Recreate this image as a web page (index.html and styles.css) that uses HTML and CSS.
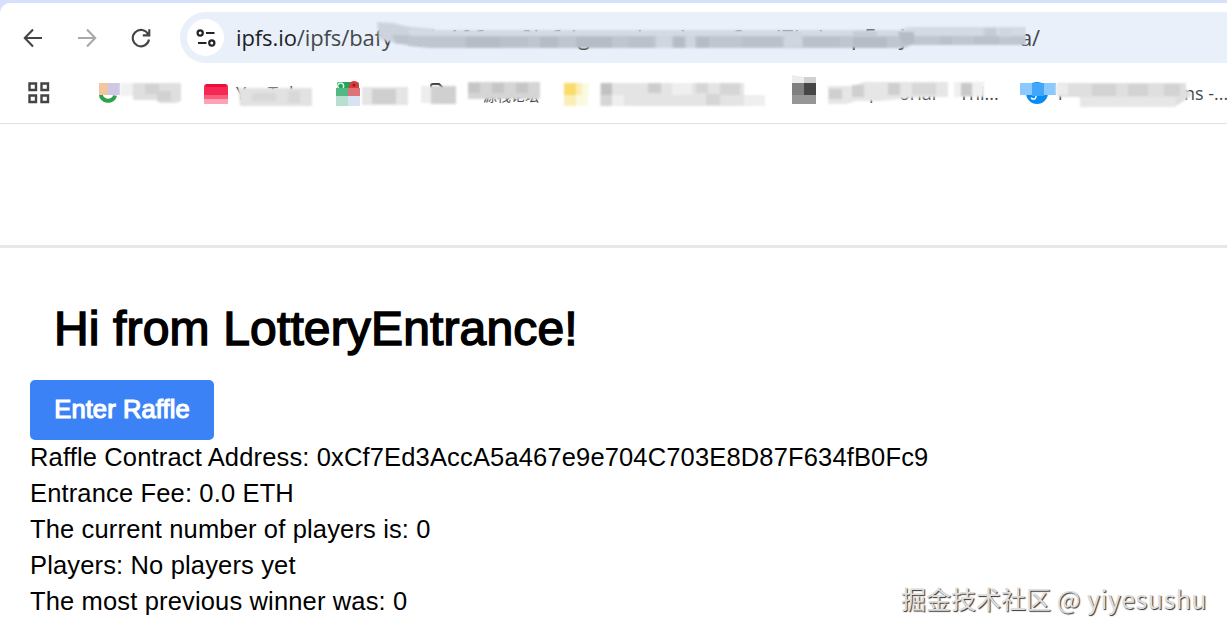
FILE: index.html
```
<!DOCTYPE html>
<html lang="en">
<head>
    <meta charset="UTF-8">
    <meta name="viewport" content="width=device-width, initial-scale=1.0">
    <title>Lottery Entrance</title>
    <link rel="stylesheet" href="styles.css">
</head>
<body>

    <div class="browser">
        <div class="toolbar">
            <svg class="nav-icon" width="24" height="24" viewBox="0 0 24 24"><path d="M21 12H4M12 3.500L3.800 12l8.200 8.500"/></svg>
            <svg class="nav-icon disabled" width="24" height="24" viewBox="0 0 24 24"><path d="M3 12h17M12 3.500L20.200 12 12 20.500"/></svg>
            <svg class="nav-icon" width="24" height="24" viewBox="0 0 24 24"><path d="M19.300 8.500A8.200 8.200 0 1 0 20 13.500M20.300 3.200v6.200h-6.500"/></svg>
            <div class="address-bar">
                <div class="site-info">
                    <svg width="20" height="20" viewBox="0 0 20 20"><circle cx="4.200" cy="5" r="2.600"/><path d="M10 5h8.500M2 15h8.500"/><circle cx="15.800" cy="15" r="2.600"/></svg>
                </div>
                <div class="url">
                    <span class="url-text"><b>ipfs.io</b>/ipfs/bafy</span>
                    <svg class="url-mosaic" width="650" height="36" viewBox="376 20 650 36">
                        <g class="hidden-url">
                            <text x="418" y="46">i</text><text x="430" y="46">h</text>
                            <text x="448" y="46">106</text><text x="521" y="46">2h</text><text x="550" y="46">6</text>
                            <text x="571" y="46">i</text><text x="578" y="45">g</text><text x="637" y="46">i</text>
                            <text x="680" y="46">l</text><text x="725" y="46">t2</text><text x="776" y="46">l7h</text>
                            <text x="818" y="46">h</text><text x="851" y="45">p5</text><text x="900" y="45">j</text>
                        </g>
                        <g class="soft">
                            <path fill="#cdd3dc" d="M377 22l15 1 18 4 25 2v10h-12l-13 7-15-3-16-4z"/>
                            <path fill="#d4dae3" d="M408 29l27 1 465 0 8-3h118v13H410z"/>
                            <path fill="#bec4cd" d="M392 35h18v9h-14z"/>
                            <path fill="#c0c6cf" d="M408 36h618v9H912l-8 3H430l-22-2z"/>
                            <path fill="#b6bcc5" d="M466 37h36v11h-36zM540 37h18v11h-18zM576 37h36v11h-36zM674 37h10v11h-10zM697 37h12v11h-12zM853 37h34v11h-34zM898 32h16v12h-12z"/>
                            <path fill="#bbc1ca" d="M500 37h28v10h-28zM628 37h25v11h-25zM742 37h40v10h-40zM804 37h36v10h-36zM940 36h12v9h-12zM974 36h25v8h-25z"/>
                            <path fill="#d0d6df" d="M656 36h16v12h-16zM686 36h9v12h-9zM784 32h18v15h-18zM1000 29h12v8h-12z"/>
                            <path fill="#c6ccd5" d="M853 31h24v6h-24zM984 28h12v8h-12z"/>
                        </g>
                    </svg>
                    <span class="url-end">a/</span>
                </div>
            </div>
        </div>

        <div class="bookmarks">
            <svg class="apps" width="24" height="24" viewBox="0 0 24 24"><path d="M2.500 2.500h6.500v6.500H2.500zM14.500 2.500H21v6.500h-6.500zM2.500 14.500h6.500V21H2.500zM14.500 14.500H21V21h-6.500z"/></svg>
            <div class="separator"></div>

            <svg class="bookmark google" width="88" height="40" viewBox="96 74 88 40">
                <path fill="none" stroke="#2fa14e" stroke-width="4" d="M101 95a7 6 0 0 0 14 1.500"/>
                <path fill="#f3c6a2" d="M99 84h9v12h-9z"/><path fill="#cfc8e5" d="M108 84h12v12h-12z"/>
                <g class="soft"><path fill="#f1f1f1" d="M120 84h13v13h-13z"/><path fill="#dfdfdf" d="M133 84h48v18l-5 2h-16l-4-3h-23z"/><path fill="#d2d2d2" d="M145 85h14v10h-14zM157 92h14v10h-14z"/></g>
            </svg>

            <svg class="bookmark youtube" width="116" height="40" viewBox="200 74 116 40">
                <rect x="204" y="85" width="24" height="20" rx="3" fill="#f52953"/>
                <path fill="#fa5d7b" d="M204 96h24v4h-24z"/><path fill="#fda3b4" d="M204 100h24v5h-24z"/><path fill="#e80f3c" d="M206 85h20v3h-20z"/>
                <text x="236" y="101">YouTube</text>
                <g class="soft"><path fill="#e2e2e2" d="M238 89h74v18h-72z"/><path fill="#d8d8d8" d="M252 94h24v8h-24zM288 92h12v12h-12z"/></g>
            </svg>

            <svg class="bookmark maps" width="80" height="40" viewBox="332 74 80 40">
                <rect x="337" y="83" width="22" height="20" rx="2" fill="#22a45d"/>
                <path fill="none" stroke="#d9f3e2" stroke-width="1.500" d="M343 89a3 3 0 1 0-3 1"/>
                <circle cx="354" cy="87" r="5" fill="#e1383c"/><circle cx="354" cy="86" r="1.500" fill="#8d1e25"/>
                <text x="368" y="102" class="small">地图</text>
                <path fill="#55b884" d="M336 89h12v8h-12z"/><path fill="#dc7477" d="M348 89h12v8h-12z"/>
                <path fill="#b9dfd0" d="M336 97h12v10h-12z"/><path fill="#d7e3f2" d="M348 97h12v10h-12z"/>
                <g class="soft"><path fill="#e5e5e5" d="M362 88h46v18h-46z"/><path fill="#cfcfcf" d="M372 90h24v15h-24z"/></g>
            </svg>

            <svg class="bookmark folder" width="40" height="40" viewBox="420 74 40 40">
                <path fill="none" stroke="#444" stroke-width="2" d="M431 90v-3q0-2 2-2h6l3 3v3"/>
                <g class="soft"><path fill="#ededed" d="M421 87h10v17h-10z"/><path fill="#d0d0d0" d="M431 87h25v18h-25z"/></g>
            </svg>

            <svg class="bookmark folder-name" width="78" height="40" viewBox="466 74 78 40">
                <text x="483" y="102" class="small">源栈论坛</text>
                <g class="soft"><path fill="#d5d5d5" d="M468 83h72v17h-72z"/><path fill="#c6c6c6" d="M468 84h12v10h-12zM492 84h12v10h-12zM516 84h12v10h-12z"/></g>
            </svg>

            <svg class="bookmark notes" width="210" height="40" viewBox="560 74 210 40">
                <g class="soft"><path fill="#f9dc6b" d="M564 84h12v12h-12z"/><path fill="#fbeeb4" d="M564 96h12v11h-12zM576 84h6v12h-6z"/><path fill="#fbfae0" d="M576 96h12v11h-12zM582 84h7v12h-7z"/></g>
                <g class="soft"><path fill="#e4e4e4" d="M600 84h144v23H600z"/><path fill="#c2c2c2" d="M601 84h11v12h-11z"/><path fill="#cdcdcd" d="M648 84h13v10h-13z"/><path fill="#d6d6d6" d="M601 96h11v11h-11zM696 84h12v10h-12zM706 95h14v11h-14zM720 84h20v12h-20z"/><path fill="#efefef" d="M612 96h12v11h-12zM672 84h20v12h-20zM744 96h21v11h-21z"/></g>
            </svg>

            <svg class="bookmark tutorial" width="212" height="40" viewBox="788 74 212 40">
                <path fill="#ededed" d="M792 76l12 2v6h-12z"/><path fill="#d0d0d0" d="M804 78h12v6h-12z"/>
                <path fill="#808080" d="M792 84h12v12h-12z"/><path fill="#464646" d="M804 84h12v12h-12z"/><path fill="#969696" d="M792 96h24v9h-24z"/>
                <text x="869" y="100">p</text><text x="899" y="101">orial</text><text x="959" y="101">Thi...</text>
                <g class="soft"><path fill="#e6e6e6" d="M828 87h24l12-4h84v15l-38 1-30 3-24 0-10 3h-18z"/><path fill="#cfcfcf" d="M829 90h13v10h-13zM852 86h12v12h-12zM888 84h12v12h-12z"/><path fill="#d8d8d8" d="M912 84h24v12h-24z"/><path fill="#f0f0f0" d="M954 83h30v15h-30z"/><path fill="#c9c9c9" d="M961 84h11v13h-11z"/></g>
            </svg>

            <svg class="bookmark questions" width="211" height="40" viewBox="1016 74 211 40">
                <circle cx="1037" cy="94" r="11" fill="#078cf4"/><path fill="none" stroke="#fff" stroke-width="1.500" d="M1031 99q5 3 5-2"/>
                <path fill="#8cc9fd" d="M1020 84h12v12h-12zM1044 84h12v12h-12z"/><path fill="#42a7fb" d="M1032 84h12v13h-12z"/>
                <text x="1058" y="101">r</text><text x="1184" y="101">ns -...</text>
                <g class="soft"><path fill="#dfdfdf" d="M1058 84h128v6l6 6-14 10h-95l-4-8h-21z"/><path fill="#ececec" d="M1056 85h12v11h-12z"/><path fill="#d3d3d3" d="M1092 85h24v12h-24zM1128 85h20v12h-20zM1164 85h16v12h-16z"/><path fill="#e7e7e7" d="M1080 98h96v10h-96z"/></g>
            </svg>
        </div>
    </div>

    <header></header>

    <main>
        <h1>Hi from LotteryEntrance!</h1>
        <button>Enter Raffle</button>
        <div>Raffle Contract Address: 0xCf7Ed3AccA5a467e9e704C703E8D87F634fB0Fc9</div>
        <div>Entrance Fee: 0.0 ETH</div>
        <div>The current number of players is: 0</div>
        <div>Players: No players yet</div>
        <div>The most previous winner was: 0</div>
    </main>

    <div class="watermark">掘金技术社区 <span>@ yiyesushu</span></div>

</body>
</html>
```
FILE: styles.css
```
* {
    box-sizing: border-box;
}

body {
    margin: 0;
    height: 634px;
    overflow: hidden;
    position: relative;
    background-color: #fff;
    color: #000;
    font-family: "Liberation Sans", Arial, sans-serif;
}

svg {
    display: block;
    flex: none;
}

.browser {
    height: 124px;
    padding-top: 3px;
    background-color: #d6e2fb;
    border-bottom: 1px solid #dfe1e3;
}

.toolbar {
    display: flex;
    align-items: center;
    gap: 30px;
    height: 60px;
    padding: 9px 0 0 21px;
    background-color: #fff;
    border-top-left-radius: 10px;
}

.nav-icon {
    fill: none;
    stroke: #434547;
    stroke-width: 2.1;
}

.disabled {
    stroke: #a9a9a9;
}

.address-bar {
    display: flex;
    align-items: center;
    flex: 1;
    height: 51px;
    margin-left: -3px;
    padding-left: 7px;
    background-color: #eaf0f9;
    border-radius: 26px 0 0 26px;
}

.site-info {
    display: flex;
    align-items: center;
    justify-content: center;
    width: 37px;
    height: 37px;
    margin-right: 12px;
    background-color: #fff;
    border-radius: 50%;
}

.site-info svg {
    fill: none;
    stroke: #222426;
    stroke-width: 2.2;
}

.url {
    position: relative;
    display: flex;
    width: 804px;
    justify-content: space-between;
    margin-bottom: 2px;
    font-family: "Open Sans", "Noto Sans", sans-serif;
    font-size: 22px;
    line-height: 36px;
    letter-spacing: -0.1px;
    white-space: nowrap;
    color: #44484d;
}

.url b {
    font-weight: 400;
    color: #202224;
}

.url-mosaic {
    position: absolute;
    left: 140px;
    top: 1px;
}

.hidden-url {
    fill: #44484d;
}

.soft {
    filter: blur(1px);
}

.bookmarks {
    display: flex;
    align-items: center;
    height: 60px;
    padding-left: 27px;
    background-color: #fff;
    font-family: "Open Sans", "Noto Sans CJK SC", sans-serif;
    font-size: 18px;
}

.bookmark {
    fill: #46484a;
    margin-right: 16px;
}

.small {
    font-size: 14px;
}

.apps {
    fill: none;
    stroke: #444;
    stroke-width: 2.4;
}

.separator {
    width: 3px;
    height: 24px;
    margin: 0 21px;
    background-color: #d3e3fd;
}

.google {
    margin-left: 0;
}

.maps {
    margin-right: 8px;
}

.folder {
    margin-right: 6px;
}

.notes {
    margin-right: 18px;
}

header {
    height: 124px;
    border-bottom: 3px solid #e6e7e8;
}

main {
    padding: 48px 30px 0;
    font-size: 25.5px;
    line-height: 36px;
    letter-spacing: 0.15px;
}

main div {
    position: relative;
    top: -1px;
}

h1 {
    margin: 0;
    padding: 0 24px;
    height: 84px;
    font-size: 48px;
    font-weight: 400;
    line-height: 66px;
    letter-spacing: 0.15px;
    -webkit-text-stroke: 1.5px #000;
}

button {
    display: block;
    width: 184px;
    height: 60px;
    padding: 0 0 2px;
    border: none;
    border-radius: 5px;
    background-color: #3b82f6;
    color: #fff;
    font-family: inherit;
    font-size: 25.5px;
    letter-spacing: 0.1px;
    -webkit-text-stroke: 1.2px #fff;
}

.bookmarks .separator {
    margin-right: 24px;
}

.watermark {
    position: absolute;
    right: 20px;
    bottom: 18px;
    font-family: "Noto Sans CJK SC", sans-serif;
    font-size: 25px;
    line-height: 36px;
    color: #dedede;
    text-shadow: 1px 1px 1px #333;
}

.watermark span {
    letter-spacing: 0.5px;
}
```
